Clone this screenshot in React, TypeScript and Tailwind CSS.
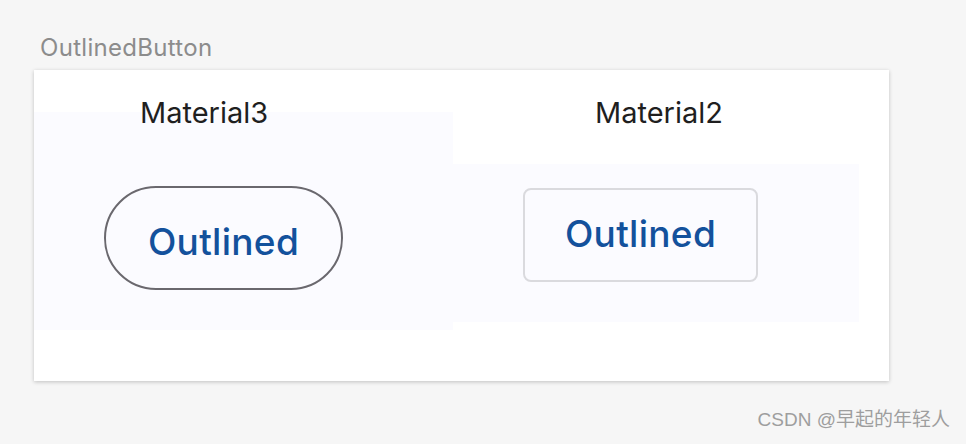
import React from "react";

const font = { fontFamily: "Inter, 'Noto Sans', sans-serif" };

export default function App() {
  return (
    <div className="w-[966px] h-[444px] bg-[#f6f6f6] overflow-hidden flex flex-col" style={font}>
      <div className="pl-[40px] pt-[36px] text-[24px] leading-none text-[#8c8c8c] tracking-[0.3px]">
        OutlinedButton
      </div>
      <div className="ml-[34px] mt-[10px] w-[855px] h-[311px] bg-white shadow-[0_1px_4px_rgba(0,0,0,0.22)] flex">
        {/* Material3 column */}
        <div className="w-[419px] flex flex-col pt-[28px]">
          <div className="relative z-10 ml-[106px] text-[29px] leading-none text-[#1f1f1f] mb-[-15px]">
            Material3
          </div>
          <div className="h-[218px] bg-[#fbfbff] pt-[74px] pl-[70px]">
            <div className="w-[239px] h-[104px] rounded-full border-2 border-[#6a686e] flex items-center justify-center pt-[6px]">
              <span className="text-[37px] leading-none text-[#13519c] font-medium tracking-[0.3px]">Outlined</span>
            </div>
          </div>
        </div>
        {/* Material2 column */}
        <div className="w-[406px] flex flex-col pt-[28px]">
          <div className="ml-[142px] text-[29px] leading-none text-[#1f1f1f]">Material2</div>
          <div className="mt-[37px] h-[158px] bg-[#fbfbff] pt-[24px] pl-[70px]">
            <div className="w-[235px] h-[94px] rounded-[8px] border-2 border-[#dadade] flex items-center justify-center pb-[4px]">
              <span className="text-[37px] leading-none text-[#13519c] font-medium tracking-[0.3px]">Outlined</span>
            </div>
          </div>
        </div>
      </div>
      <div className="mt-[29px] pr-[16px] flex justify-end">
        <span
          className="text-[19px] leading-none text-[#9e9e9e]"
          style={{ fontFamily: "'Liberation Sans', 'Noto Sans CJK SC', sans-serif" }}
        >
          CSDN @早起的年轻人
        </span>
      </div>
    </div>
  );
}
